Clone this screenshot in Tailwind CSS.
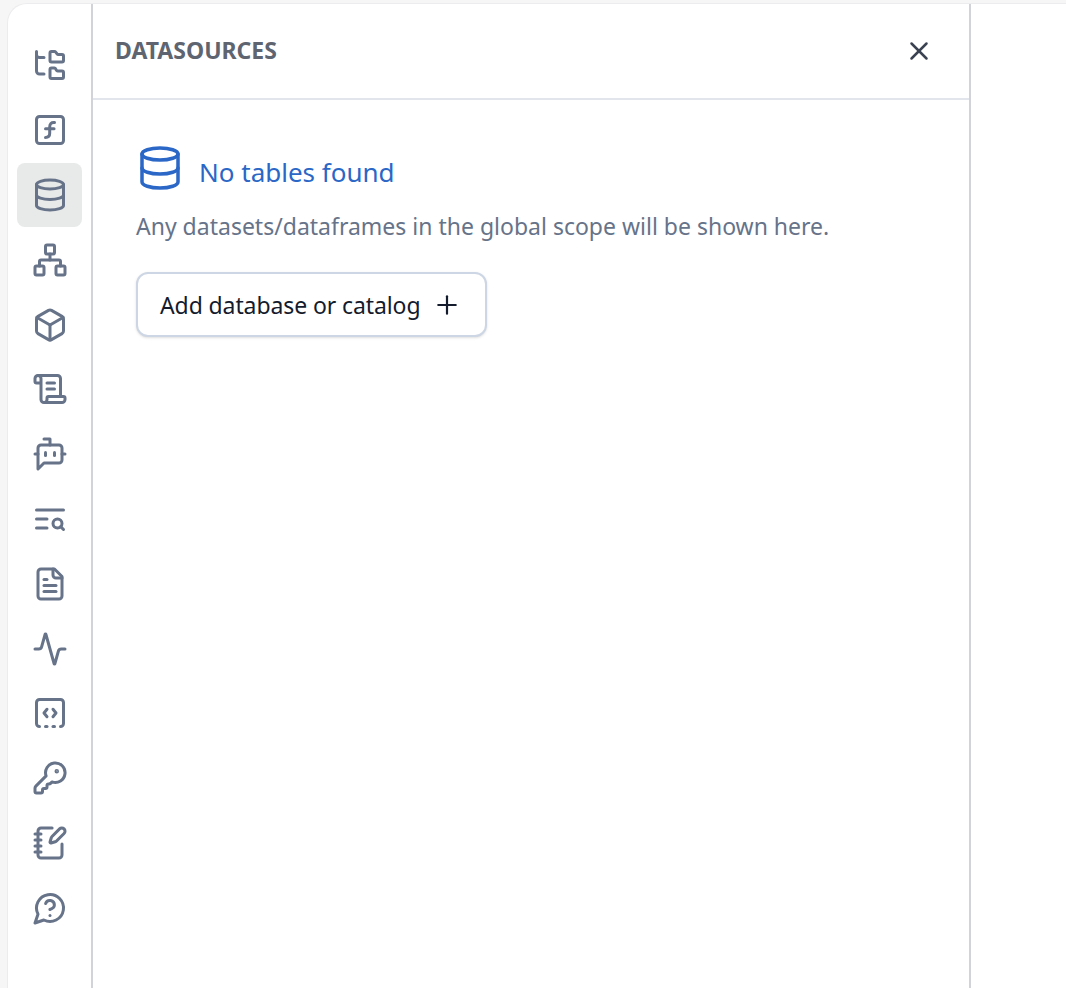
<!doctype html>
<html><head><meta charset="utf-8"><script src="https://cdn.jsdelivr.net/npm/@tailwindcss/browser@4"></script></head>
<body class="m-0">
<div class="w-[1066px] h-[988px] overflow-hidden bg-[#f6f6f6] pt-[3px] pl-[7px] font-['Noto_Sans',sans-serif]">
<div class="flex h-full bg-white rounded-tl-[20px] border-l border-t border-[#ececee]">
  <nav class="w-[85px] shrink-0 border-r-2 border-[#d2d2da] pt-[29px] pl-[9px] text-[#667389]">
    <div class="w-[65px] flex flex-col">
      <div class="h-[64.8px] flex items-center justify-center"><svg class="w-9 h-9" viewBox="0 0 24 24" fill="none" stroke="currentColor" stroke-width="2" stroke-linecap="round" stroke-linejoin="round"><path d="M20 10a1 1 0 0 0 1-1V6a1 1 0 0 0-1-1h-2.5a1 1 0 0 1-.8-.4l-.9-1.2A1 1 0 0 0 15 3h-2a1 1 0 0 0-1 1v5a1 1 0 0 0 1 1Z"/><path d="M20 21a1 1 0 0 0 1-1v-3a1 1 0 0 0-1-1h-2.9a1 1 0 0 1-.88-.55l-.42-.85a1 1 0 0 0-.92-.6H13a1 1 0 0 0-1 1v5a1 1 0 0 0 1 1Z"/><path d="M3 5a2 2 0 0 0 2 2h3"/><path d="M3 3v13a2 2 0 0 0 2 2h3"/></svg></div>
      <div class="h-[64.8px] flex items-center justify-center"><svg class="w-9 h-9" viewBox="0 0 24 24" fill="none" stroke="currentColor" stroke-width="2" stroke-linecap="round" stroke-linejoin="round"><rect width="18" height="18" x="3" y="3" rx="2" ry="2"/><path d="M9 17c2 0 2.8-1 2.8-2.8V10c0-2 1-3.3 3.2-3"/><path d="M9 11.2h5.7"/></svg></div>
      <div class="h-[64.8px] flex items-center justify-center bg-[#e8e9e9] rounded-lg"><svg class="w-9 h-9" viewBox="0 0 24 24" fill="none" stroke="currentColor" stroke-width="2" stroke-linecap="round" stroke-linejoin="round"><ellipse cx="12" cy="5" rx="9" ry="3"/><path d="M3 5V19A9 3 0 0 0 21 19V5"/><path d="M3 12A9 3 0 0 0 21 12"/></svg></div>
      <div class="h-[64.8px] flex items-center justify-center"><svg class="w-9 h-9" viewBox="0 0 24 24" fill="none" stroke="currentColor" stroke-width="2" stroke-linecap="round" stroke-linejoin="round"><rect x="16" y="16" width="6" height="6" rx="1"/><rect x="2" y="16" width="6" height="6" rx="1"/><rect x="9" y="2" width="6" height="6" rx="1"/><path d="M5 16v-3a1 1 0 0 1 1-1h12a1 1 0 0 1 1 1v3"/><path d="M12 12V8"/></svg></div>
      <div class="h-[64.8px] flex items-center justify-center"><svg class="w-9 h-9" viewBox="0 0 24 24" fill="none" stroke="currentColor" stroke-width="2" stroke-linecap="round" stroke-linejoin="round"><path d="M21 8a2 2 0 0 0-1-1.73l-7-4a2 2 0 0 0-2 0l-7 4A2 2 0 0 0 3 8v8a2 2 0 0 0 1 1.73l7 4a2 2 0 0 0 2 0l7-4A2 2 0 0 0 21 16Z"/><path d="m3.3 7 8.7 5 8.7-5"/><path d="M12 22V12"/></svg></div>
      <div class="h-[64.8px] flex items-center justify-center"><svg class="w-9 h-9" viewBox="0 0 24 24" fill="none" stroke="currentColor" stroke-width="2" stroke-linecap="round" stroke-linejoin="round"><path d="M15 12h-5"/><path d="M15 8h-5"/><path d="M19 17V5a2 2 0 0 0-2-2H4"/><path d="M8 21h12a2 2 0 0 0 2-2v-1a1 1 0 0 0-1-1H11a1 1 0 0 0-1 1v1a2 2 0 1 1-4 0V5a2 2 0 1 0-4 0v2a1 1 0 0 0 1 1h3"/></svg></div>
      <div class="h-[64.8px] flex items-center justify-center"><svg class="w-9 h-9" viewBox="0 0 24 24" fill="none" stroke="currentColor" stroke-width="2" stroke-linecap="round" stroke-linejoin="round"><path d="M12 6V2H8"/><path d="m8 18-4 4V8a2 2 0 0 1 2-2h12a2 2 0 0 1 2 2v8a2 2 0 0 1-2 2Z"/><path d="M2 12h2"/><path d="M9 11v2"/><path d="M15 11v2"/><path d="M20 12h2"/></svg></div>
      <div class="h-[64.8px] flex items-center justify-center"><svg class="w-9 h-9" viewBox="0 0 24 24" fill="none" stroke="currentColor" stroke-width="2" stroke-linecap="round" stroke-linejoin="round"><path d="M21 6H3"/><path d="M10 12H3"/><path d="M10 18H3"/><circle cx="17" cy="15" r="3"/><path d="m21 19-1.9-1.9"/></svg></div>
      <div class="h-[64.8px] flex items-center justify-center"><svg class="w-9 h-9" viewBox="0 0 24 24" fill="none" stroke="currentColor" stroke-width="2" stroke-linecap="round" stroke-linejoin="round"><path d="M15 2H6a2 2 0 0 0-2 2v16a2 2 0 0 0 2 2h12a2 2 0 0 0 2-2V7Z"/><path d="M14 2v4a2 2 0 0 0 2 2h4"/><path d="M10 9H8"/><path d="M16 13H8"/><path d="M16 17H8"/></svg></div>
      <div class="h-[64.8px] flex items-center justify-center"><svg class="w-9 h-9" viewBox="0 0 24 24" fill="none" stroke="currentColor" stroke-width="2" stroke-linecap="round" stroke-linejoin="round"><path d="M22 12h-2.48a2 2 0 0 0-1.93 1.46l-2.35 8.36a.25.25 0 0 1-.48 0L9.24 2.18a.25.25 0 0 0-.48 0l-2.35 8.36A2 2 0 0 1 4.49 12H2"/></svg></div>
      <div class="h-[64.8px] flex items-center justify-center"><svg class="w-9 h-9" viewBox="0 0 24 24" fill="none" stroke="currentColor" stroke-width="2" stroke-linecap="round" stroke-linejoin="round"><path d="M10 9.5 8 12l2 2.5"/><path d="M14 21h1"/><path d="m14 9.5 2 2.5-2 2.5"/><path d="M5 21a2 2 0 0 1-2-2V5a2 2 0 0 1 2-2h14a2 2 0 0 1 2 2v14a2 2 0 0 1-2 2"/><path d="M9 21h1"/></svg></div>
      <div class="h-[64.8px] flex items-center justify-center"><svg class="w-9 h-9" viewBox="0 0 24 24" fill="none" stroke="currentColor" stroke-width="2" stroke-linecap="round" stroke-linejoin="round"><path d="M2.586 17.414A2 2 0 0 0 2 18.828V21a1 1 0 0 0 1 1h3a1 1 0 0 0 1-1v-1a1 1 0 0 1 1-1h1a1 1 0 0 0 1-1v-1a1 1 0 0 1 1-1h.172a2 2 0 0 0 1.414-.586l.814-.814a6.5 6.5 0 1 0-4-4z"/><circle cx="16.5" cy="7.5" r=".5" fill="currentColor"/></svg></div>
      <div class="h-[64.8px] flex items-center justify-center"><svg class="w-9 h-9" viewBox="0 0 24 24" fill="none" stroke="currentColor" stroke-width="2" stroke-linecap="round" stroke-linejoin="round"><path d="M13.4 2H6a2 2 0 0 0-2 2v16a2 2 0 0 0 2 2h12a2 2 0 0 0 2-2v-7.4"/><path d="M2 6h4"/><path d="M2 10h4"/><path d="M2 14h4"/><path d="M2 18h4"/><path d="M21.378 5.626a1 1 0 1 0-3.004-3.004l-5.01 5.012a2 2 0 0 0-.506.854l-.837 2.87a.5.5 0 0 0 .62.62l2.87-.837a2 2 0 0 0 .854-.506z"/></svg></div>
      <div class="h-[64.8px] flex items-center justify-center"><svg class="w-9 h-9" viewBox="0 0 24 24" fill="none" stroke="currentColor" stroke-width="2" stroke-linecap="round" stroke-linejoin="round"><path d="M7.9 20A9 9 0 1 0 4 16.1L2 22Z"/><path d="M9.09 9a3 3 0 0 1 5.83 1c0 2-3 3-3 3"/><path d="M12 17h.01"/></svg></div>
    </div>
  </nav>
  <main class="w-[878px] shrink-0 border-r-2 border-[#d2d2da] flex flex-col">
    <header class="h-[96px] shrink-0 border-b-2 border-[#e2e5eb] flex items-center justify-between pl-[22px] pr-[35px]">
      <h1 class="text-[23px] leading-[32px] mb-[2px] font-bold text-[#5e6570]">DATASOURCES</h1>
      <svg class="w-[30px] h-[30px] text-[#3b4252]" viewBox="0 0 24 24" fill="none" stroke="currentColor" stroke-width="2" stroke-linecap="round" stroke-linejoin="round"><path d="M18 6 6 18"/><path d="m6 6 12 12"/></svg>
    </header>
    <section class="pl-[43px] pt-[44px]">
      <div class="flex items-center gap-[15px] text-[#2a67c6]">
        <svg class="w-12 h-12" viewBox="0 0 24 24" fill="none" stroke="currentColor" stroke-width="1.75" stroke-linecap="round" stroke-linejoin="round"><ellipse cx="12" cy="5" rx="9" ry="3"/><path d="M3 5V19A9 3 0 0 0 21 19V5"/><path d="M3 12A9 3 0 0 0 21 12"/></svg>
        <span class="text-[26px] leading-[40px] mt-[8px]">No tables found</span>
      </div>
      <p class="mt-[16px] text-[23px] leading-[36px] text-[#667389]">Any datasets/dataframes in the global scope will be shown here.</p>
      <button class="mt-[28px] w-[351px] h-[65px] flex items-center gap-[12px] pl-[22px] rounded-[12px] border-2 border-[#cdd6e4] bg-white shadow-sm text-[23px] tracking-[-0.1px] text-[#141b2d]"><span class="mt-[2px]">Add database or catalog</span><svg class="w-[30px] h-[30px] shrink-0" viewBox="0 0 24 24" fill="none" stroke="currentColor" stroke-width="1.75" stroke-linecap="round" stroke-linejoin="round"><path d="M5 12h14"/><path d="M12 5v14"/></svg></button>
    </section>
  </main>
  <div class="flex-1"></div>
</div>
</div>
</body></html>
